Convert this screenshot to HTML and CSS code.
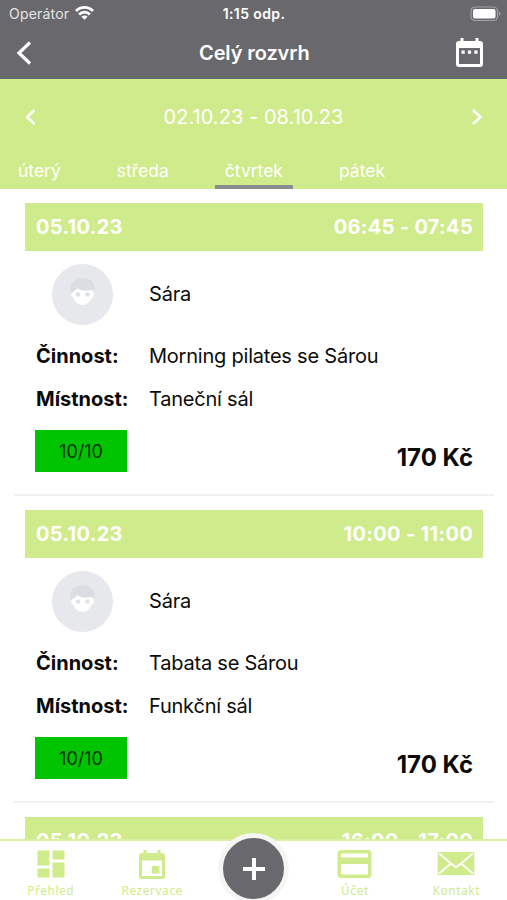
FILE: index.html
```
<!DOCTYPE html>
<html lang="cs">
  <head>
    <meta charset="UTF-8" />
    <meta name="viewport" content="width=device-width, initial-scale=1.0" />
    <title>Celý rozvrh</title>
    <link rel="stylesheet" href="styles.css">
  </head>
  <body>
    <div class="app">
      <header class="header">
        <div class="status">
          <div class="carrier">
            <span>Operátor</span>
            <svg width="19" height="15" viewBox="0 0 19 15" fill="none" stroke="#fff" stroke-width="2.8">
              <path d="M1 6a12 12 0 0 1 17 0" />
              <path d="M4.1 9.400a7.6 7.6 0 0 1 10.8 0" />
              <path d="M9.5 14.800 6.400 11.700a4.400 4.400 0 0 1 6.200 0z" fill="#fff" stroke="none" />
            </svg>
          </div>
          <div class="clock">1:15 odp.</div>
          <div class="battery">
            <svg width="31" height="16" viewBox="0 0 31 16">
              <rect x="1" y="1" width="26.5" height="13.5" rx="4" fill="none" stroke="#a0a1a4" stroke-width="1.2" />
              <rect x="3" y="3" width="22.5" height="9.5" rx="2" fill="#fff" />
              <path d="M29 5.5v4.5q1.5-.8 1.5-2.2T29 5.5z" fill="#a0a1a4" />
            </svg>
          </div>
        </div>
        <div class="title_bar">
          <svg width="16" height="26" viewBox="0 0 16 26" fill="none" stroke="#fff" stroke-width="3.2">
            <path d="M14 2.500 3 13l11 10.500" />
          </svg>
          <h1>Celý rozvrh</h1>
          <svg class="calendar" width="27" height="30" viewBox="0 0 27 30" fill="#fff">
            <path fill-rule="evenodd" d="M4.5 0h3v3h12V0h3v3H24a3 3 0 0 1 3 3v20a3 3 0 0 1-3 3H3a3 3 0 0 1-3-3V6a3 3 0 0 1 3-3h1.500zM3 10v16h21V10z" />
            <path d="M5.500 12.500h3.200v3.200H5.500zM11.900 12.500h3.200v3.200h-3.200zM18.300 12.500h3.200v3.200h-3.200z" />
          </svg>
        </div>
      </header>

      <section class="week">
        <div class="week_range">
          <svg width="12" height="18" viewBox="0 0 12 18" fill="none" stroke="#fff" stroke-width="2.600">
            <path d="M10.500 2 3 9l7.500 7" />
          </svg>
          <span>02.10.23 - 08.10.23</span>
          <svg width="12" height="18" viewBox="0 0 12 18" fill="none" stroke="#fff" stroke-width="2.600">
            <path d="m2 2 7.500 7L2 16" />
          </svg>
        </div>
        <div class="tabs">
          <div class="tab">úterý</div>
          <div class="tab">středa</div>
          <div class="tab active">čtvrtek</div>
          <div class="tab">pátek</div>
        </div>
      </section>

      <main class="list">
        <article class="lesson">
          <div class="lesson_head"><span>05.10.23</span><span>06:45 - 07:45</span></div>
          <div class="trainer">
            <svg class="avatar" viewBox="0 0 61 61">
              <circle cx="30.500" cy="30.500" r="30.500" fill="#e6e8eb" />
              <path d="M19 29q-3-8 3-12 8-5 16-1 7 4 3 13z" fill="#dadde1" />
              <path d="M20.500 28q3-1 5-4 4 4 14 2l2 2q2 4-2 6-3 7-9 7t-9-7q-4-3-1-6z" fill="#fff" />
              <circle cx="26" cy="30.500" r="2.300" fill="#dfe2e5" />
              <circle cx="35.500" cy="30.500" r="2.300" fill="#dfe2e5" />
            </svg>
            <span>Sára</span>
          </div>
          <div class="row"><b>Činnost:</b><span>Morning pilates se Sárou</span></div>
          <div class="row"><b>Místnost:</b><span>Taneční sál</span></div>
          <div class="lesson_foot">
            <div class="capacity">10/10</div>
            <div class="price">170 Kč</div>
          </div>
        </article>

        <article class="lesson">
          <div class="lesson_head"><span>05.10.23</span><span>10:00 - 11:00</span></div>
          <div class="trainer">
            <svg class="avatar" viewBox="0 0 61 61">
              <circle cx="30.500" cy="30.500" r="30.500" fill="#e6e8eb" />
              <path d="M19 29q-3-8 3-12 8-5 16-1 7 4 3 13z" fill="#dadde1" />
              <path d="M20.500 28q3-1 5-4 4 4 14 2l2 2q2 4-2 6-3 7-9 7t-9-7q-4-3-1-6z" fill="#fff" />
              <circle cx="26" cy="30.500" r="2.300" fill="#dfe2e5" />
              <circle cx="35.500" cy="30.500" r="2.300" fill="#dfe2e5" />
            </svg>
            <span>Sára</span>
          </div>
          <div class="row"><b>Činnost:</b><span>Tabata se Sárou</span></div>
          <div class="row"><b>Místnost:</b><span>Funkční sál</span></div>
          <div class="lesson_foot">
            <div class="capacity">10/10</div>
            <div class="price">170 Kč</div>
          </div>
        </article>

        <article class="lesson">
          <div class="lesson_head"><span>05.10.23</span><span>16:00 - 17:00</span></div>
        </article>
      </main>

      <nav class="nav">
        <div class="nav_item">
          <svg width="28" height="28" viewBox="0 0 28 28" fill="#d0eb8b">
            <path d="M.5.500h12v15H.5zM15.500.500h12v9h-12zM.5 18.500h12v9H.5zM15.500 12.500h12v15h-12z" />
          </svg>
          <span>Přehled</span>
        </div>
        <div class="nav_item">
          <svg width="28" height="30" viewBox="0 0 28 30" fill="#d0eb8b">
            <path fill-rule="evenodd" d="M5.500 0h3v3h11V0h3v3H24a3 3 0 0 1 3 3v20a3 3 0 0 1-3 3H4a3 3 0 0 1-3-3V6a3 3 0 0 1 3-3h1.500zM4 10.500V26h20V10.500z" />
            <path d="M14 16h7.500v7.500H14z" />
          </svg>
          <span>Rezervace</span>
        </div>
        <div class="nav_item"></div>
        <div class="nav_item">
          <svg width="35" height="28" viewBox="0 0 35 28" fill="#d0eb8b">
            <path fill-rule="evenodd" d="M4 0h27a3.500 3.500 0 0 1 3.500 3.500v21A3.500 3.500 0 0 1 31 28H4a3.500 3.500 0 0 1-3.500-3.500v-21A3.500 3.500 0 0 1 4 0zM4 3.500v4h27v-4zM4 14v10.500h27V14z" />
          </svg>
          <span>Účet</span>
        </div>
        <div class="nav_item">
          <svg width="38" height="26" viewBox="0 0 38 26">
            <path d="M.7 2h36.600v23H.7z" fill="#d0eb8b" />
            <path d="m2 3.500 17 14 17-14M2 23.500 14 13.500M36 23.500 24 13.500" fill="none" stroke="#fff" stroke-width="1.800" />
          </svg>
          <span>Kontakt</span>
        </div>
        <!-- round add button over the bar -->
        <div class="add">
          <svg width="22" height="22" viewBox="0 0 22 22" stroke="#fff" stroke-width="4">
            <path d="M11 0v22M0 11h22" />
          </svg>
        </div>
      </nav>
    </div>
  </body>
</html>
```
FILE: styles.css
```
* {
  box-sizing: border-box;
}
body {
  margin: 0;
  font-family: Inter, "Liberation Sans", sans-serif;
  background-color: #ffffff;
  color: #0b0b0b;
}
svg {
  display: block;
  flex-shrink: 0;
}
.app {
  display: flex;
  flex-direction: column;
  height: 900px;
  overflow: hidden;
}
.header {
  height: 79px;
  flex-shrink: 0;
  background-color: #69696d;
  color: #ffffff;
}
.status {
  display: grid;
  grid-template-columns: 1fr auto 1fr;
  align-items: center;
  height: 27px;
  padding: 0 6px 0 7px;
  font-size: 14px;
}
.carrier {
  display: flex;
  gap: 6px;
  padding-left: 2px;
  color: #e4e4e5;
  letter-spacing: 0.2px;
}
.clock {
  font-weight: 600;
  letter-spacing: 0.4px;
}
.battery {
  justify-self: end;
}
.title_bar {
  display: grid;
  grid-template-columns: 1fr auto 1fr;
  align-items: center;
  height: 51px;
  padding: 0 24px 0 16px;
}
h1 {
  margin: 0;
  padding-right: 0;
  font-size: 20px;
  font-weight: 600;
  letter-spacing: -0.1px;
}
.title_bar {
  padding-right: 24px;
  grid-template-columns: 183px auto 1fr;
}
.calendar {
  justify-self: end;
}
.week {
  height: 110px;
  flex-shrink: 0;
  background-color: #d0eb8b;
  color: #ffffff;
}
.week_range {
  display: flex;
  align-items: center;
  justify-content: space-between;
  height: 75px;
  padding: 0 24px;
  font-size: 20px;
}
.week_range span {
  letter-spacing: 0.05px;
}
.tabs {
  display: flex;
  gap: 36px;
  height: 35px;
  padding-left: 8px;
}
.tab {
  padding: 6px 10px 0;
  font-size: 17.5px;
  line-height: 22px;
}
.active {
  border-bottom: 4px solid #8b8c90;
}
.list {
  flex: 1;
  min-height: 0;
  overflow: hidden;
  padding: 0 13px 0 14px;
}
.lesson {
  height: 307px;
  padding: 14px 11px 0;
  border-bottom: 2px solid #f1f1f2;
}
.lesson_head {
  display: flex;
  align-items: center;
  justify-content: space-between;
  height: 48px;
  padding: 0 10px 0 11px;
  background-color: #d0eb8b;
  color: #ffffff;
  font-size: 20px;
  font-weight: 700;
  letter-spacing: 0.3px;
}
.trainer {
  display: flex;
  align-items: center;
  gap: 36px;
  height: 61px;
  margin: 12.5px 0 9.5px;
  padding-left: 27px;
  font-size: 20px;
  letter-spacing: -0.2px;
}
.avatar {
  width: 61px;
  height: 61px;
}
.row {
  display: grid;
  grid-template-columns: 113px 1fr;
  align-items: center;
  height: 43.5px;
  padding-left: 11px;
  font-size: 20px;
}
.row span {
  letter-spacing: -0.22px;
}
.lesson_foot {
  display: flex;
  justify-content: space-between;
  margin-top: 9px;
  padding: 0 10px;
}
.capacity {
  width: 92px;
  height: 42px;
  background-color: #00c400;
  color: #07300a;
  font-size: 18px;
  line-height: 43px;
  text-align: center;
}
.price {
  padding-top: 13px;
  font-size: 24px;
  font-weight: 700;
  line-height: 30px;
}
.nav {
  position: relative;
  display: flex;
  height: 61px;
  flex-shrink: 0;
  border-top: 2px solid #d9efa3;
  background-color: #ffffff;
}
.nav_item {
  display: flex;
  flex: 1;
  flex-direction: column;
  align-items: center;
  justify-content: space-between;
  padding: 9px 0 1px;
  color: #d0eb8b;
  font-family: "Noto Sans", sans-serif;
  font-size: 12px;
  line-height: 16px;
  letter-spacing: 0.5px;
}
.add {
  position: absolute;
  top: -8px;
  left: 218px;
  display: flex;
  align-items: center;
  justify-content: center;
  width: 71px;
  height: 71px;
  border: 5px solid #f5f6f4;
  border-radius: 50%;
  background-color: #69696d;
}
```
